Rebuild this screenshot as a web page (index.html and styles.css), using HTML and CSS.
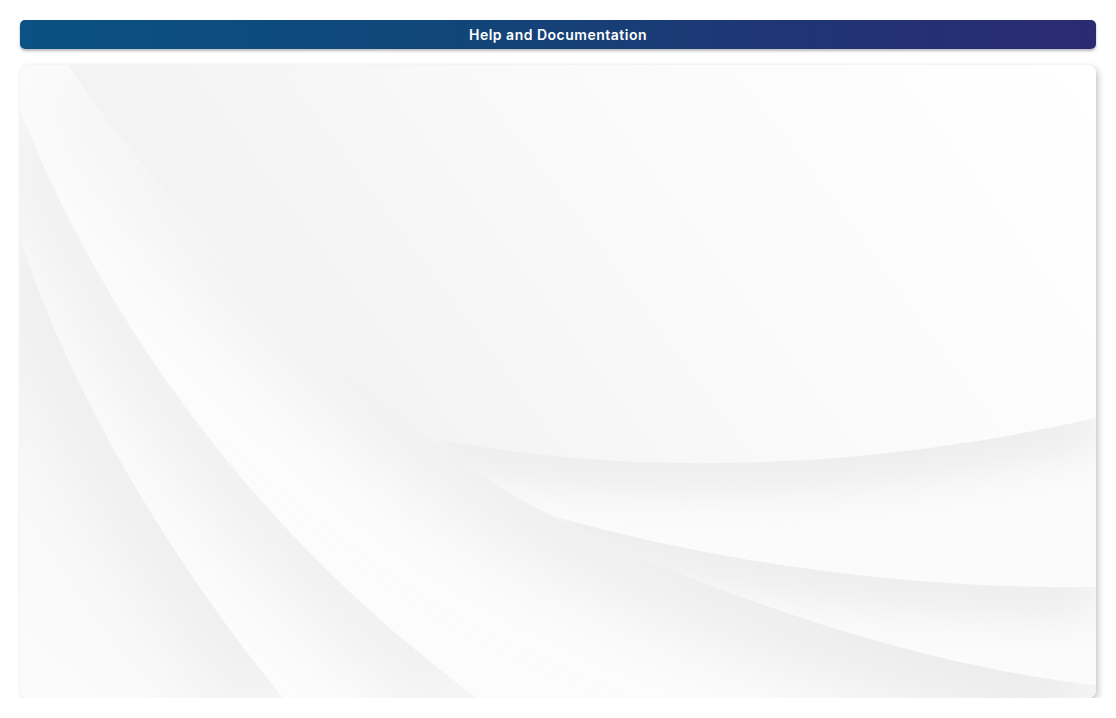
FILE: index.html
```html
<!DOCTYPE html>
<html lang="en">
<head>
<meta charset="utf-8">
<title>Help and Documentation</title>
<link rel="stylesheet" href="styles.css">
</head>
<body>
<div class="page">
  <header class="title-bar">
    <h1 class="title">Help and Documentation</h1>
  </header>
  <main class="content-card">
    <svg class="waves" viewBox="0 0 1076 633" preserveAspectRatio="none" aria-hidden="true">
      <defs>
        <linearGradient id="gTop" gradientUnits="userSpaceOnUse" x1="1000" y1="-60" x2="380" y2="400">
          <stop offset="0" stop-color="#ffffff"/>
          <stop offset="0.55" stop-color="#fafafa"/>
          <stop offset="1" stop-color="#f3f3f3"/>
        </linearGradient>
        <linearGradient id="gLeft" gradientUnits="userSpaceOnUse" x1="0" y1="633" x2="200" y2="380">
          <stop offset="0" stop-color="#fbfbfb"/>
          <stop offset="1" stop-color="#f7f7f7"/>
        </linearGradient>
        <linearGradient id="gEdge3" gradientUnits="userSpaceOnUse" x1="40" y1="0" x2="1076" y2="633">
          <stop offset="0" stop-color="#f6f6f6"/>
          <stop offset="0.45" stop-color="#efefef"/>
          <stop offset="1" stop-color="#e9e9e9"/>
        </linearGradient>
        <filter id="blur" filterUnits="userSpaceOnUse" x="-300" y="-300" width="1700" height="1300">
          <feGaussianBlur stdDeviation="20"/>
        </filter>
        <filter id="blurWide" filterUnits="userSpaceOnUse" x="-300" y="-300" width="1700" height="1300">
          <feGaussianBlur stdDeviation="38"/>
        </filter>
        <clipPath id="cA"><path d="M410,372 C540,400 780,420 1076,353 L1076,620 C870,598 650,510 530,450 C490,430 450,404 410,372 Z"/></clipPath>
        <clipPath id="cB"><path d="M530,450 C650,485 850,525 1076,522 L1076,620 C870,598 650,510 530,450 Z"/></clipPath>
        <clipPath id="cC"><path d="M48,0 C120,110 250,250 410,372 C450,404 490,430 530,450 C650,510 870,598 1076,620 L1076,633 L0,633 L0,0 Z"/></clipPath>
        <clipPath id="cD"><path d="M0,45 C50,170 170,420 457,633 L0,633 Z"/></clipPath>
        <clipPath id="cE"><path d="M0,172 C40,300 130,470 263,633 L0,633 Z"/></clipPath>
      </defs>

      <!-- top region -->
      <rect x="0" y="0" width="1076" height="633" fill="url(#gTop)"/>

      <!-- region A: below F1 -->
      <g clip-path="url(#cA)">
        <rect x="0" y="0" width="1076" height="633" fill="#fbfbfb"/>
        <path d="M410,372 C540,400 780,420 1076,353" fill="none" stroke="#ededed" stroke-width="60" filter="url(#blur)"/>
      </g>

      <!-- region B: below F2 -->
      <g clip-path="url(#cB)">
        <rect x="0" y="0" width="1076" height="633" fill="#fbfbfb"/>
        <path d="M530,450 C650,485 850,525 1076,522" fill="none" stroke="#ededed" stroke-width="60" filter="url(#blur)"/>
      </g>

      <!-- region C: below edge 3 -->
      <g clip-path="url(#cC)">
        <rect x="0" y="0" width="1076" height="633" fill="#fcfcfc"/>
        <path d="M48,0 C120,110 250,250 410,372 C450,404 490,430 530,450 C650,510 870,598 1076,620" fill="none" stroke="url(#gEdge3)" stroke-width="100" filter="url(#blurWide)"/>
      </g>

      <!-- region D: left of edge 2 -->
      <g clip-path="url(#cD)">
        <rect x="0" y="0" width="1076" height="633" fill="#fcfcfc"/>
        <path d="M0,45 C50,170 170,420 457,633" fill="none" stroke="#efefef" stroke-width="90" filter="url(#blurWide)"/>
      </g>

      <!-- region E: left of edge 1 -->
      <g clip-path="url(#cE)">
        <rect x="0" y="0" width="1076" height="633" fill="url(#gLeft)"/>
        <path d="M0,172 C40,300 130,470 263,633" fill="none" stroke="#eeeeee" stroke-width="90" filter="url(#blurWide)"/>
      </g>
    </svg>
  </main>
</div>
</body>
</html>
```

FILE: styles.css
```css
* {
  box-sizing: border-box;
}

html, body {
  margin: 0;
  padding: 0;
  background: #ffffff;
}

body {
  font-family: "Inter", "Open Sans", "Liberation Sans", sans-serif;
}

.page {
  display: flex;
  flex-direction: column;
  gap: 16px;
  padding: 20px 20px 0 20px;
}

.title-bar {
  height: 29px;
  border-radius: 5px;
  background: linear-gradient(90deg, #0a5283 0%, #114679 40%, #1f3674 70%, #2b2a73 100%);
  box-shadow: 0 2px 3px rgba(0, 0, 0, 0.28);
  display: flex;
  align-items: center;
  justify-content: center;
}

.title {
  margin: 0;
  color: #ffffff;
  font-size: 14px;
  font-weight: 600;
  letter-spacing: 0.5px;
  line-height: 1;
}

.content-card {
  height: 633px;
  border-radius: 8px;
  overflow: hidden;
  background: #fafafa;
  box-shadow: 3px 3px 6px rgba(0, 0, 0, 0.18), 0 0 3px rgba(0, 0, 0, 0.06);
}

.waves {
  display: block;
  width: 100%;
  height: 100%;
}
```
